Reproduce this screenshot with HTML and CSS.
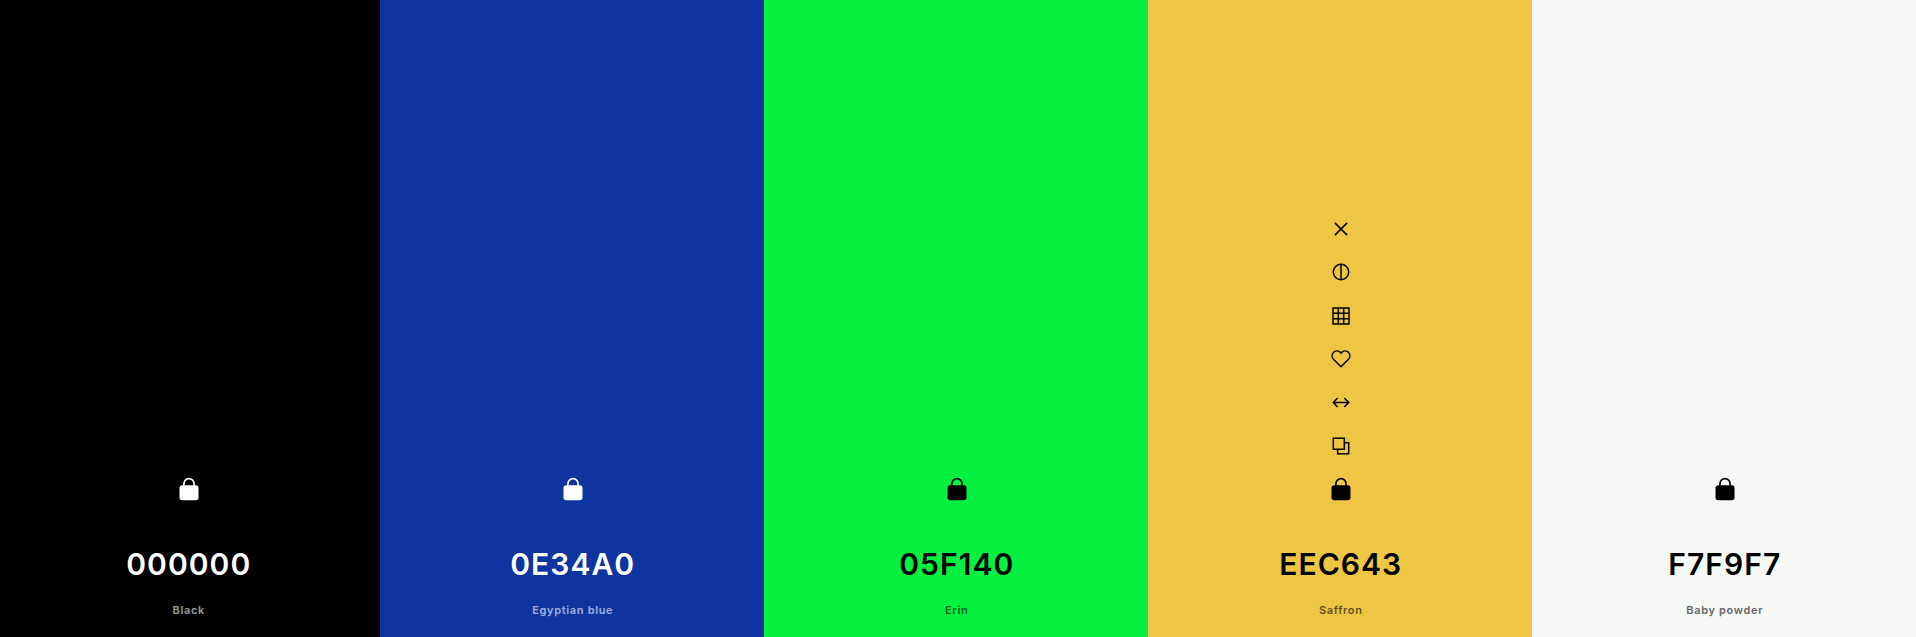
FILE: index.html
```html
<!DOCTYPE html>
<html>
<head>
	<meta charset="UTF-8">
	<title>Palette</title>
	<link rel="stylesheet" href="styles.css">
</head>
<body>
<svg class="sprite" width="0" height="0">
	<symbol id="lock" viewBox="0 0 24 24">
		<path d="M6.900 10V6.700a5.100 5.100 0 0 1 10.200 0V10" fill="none" stroke="currentColor" stroke-width="1.600"/>
		<rect x="2.500" y="8.300" width="19" height="15" rx="2.800" fill="currentColor" stroke="none"/>
	</symbol>
</svg>

<div class="palette">
	<div class="col col-black">
		<div class="tools">
			<div class="tool"><svg class="icon"><use href="#lock"/></svg></div>
		</div>
		<div class="hex">000000</div>
		<div class="name">Black</div>
	</div>

	<div class="col col-blue">
		<div class="tools">
			<div class="tool"><svg class="icon"><use href="#lock"/></svg></div>
		</div>
		<div class="hex">0E34A0</div>
		<div class="name">Egyptian blue</div>
	</div>

	<div class="col col-green">
		<div class="tools">
			<div class="tool"><svg class="icon"><use href="#lock"/></svg></div>
		</div>
		<div class="hex">05F140</div>
		<div class="name">Erin</div>
	</div>

	<div class="col col-yellow">
		<div class="tools">
			<div class="tool">
				<svg class="icon" viewBox="0 0 24 24"><path d="M5.900 5.900l12.200 12.200M18.100 5.900L5.900 18.100"/></svg>
			</div>
			<div class="tool">
				<svg class="icon" viewBox="0 0 24 24"><circle cx="12" cy="12" r="7.700"/><path d="M12 4.300v15.400"/></svg>
			</div>
			<div class="tool">
				<svg class="icon" viewBox="0 0 24 24"><path d="M4 4h16v16H4zM4 9.330h16M4 14.670h16M9.330 4v16M14.670 4v16"/></svg>
			</div>
			<div class="tool">
				<svg class="icon" viewBox="0 0 24 24"><path d="M12 19.800l-7.500-7.600a4.900 4.900 0 0 1 0-6.800 4.900 4.900 0 0 1 6.800 0l.7.700.7-.7a4.900 4.900 0 0 1 6.800 0 4.900 4.900 0 0 1 0 6.800z"/></svg>
			</div>
			<div class="tool">
				<svg class="icon" viewBox="0 0 24 24"><path d="M4.500 11.600h15M8.700 7.100l-4.400 4.500 4.400 4.500M15.300 7.100l4.400 4.500-4.400 4.500"/></svg>
			</div>
			<div class="tool">
				<svg class="icon" viewBox="0 0 24 24"><path d="M4.300 4.300h11v11h-11zM15.300 8.700h4.400v11h-11v-4.400"/></svg>
			</div>
			<div class="tool"><svg class="icon"><use href="#lock"/></svg></div>
		</div>
		<div class="hex">EEC643</div>
		<div class="name">Saffron</div>
	</div>

	<div class="col col-white">
		<div class="tools">
			<div class="tool"><svg class="icon"><use href="#lock"/></svg></div>
		</div>
		<div class="hex">F7F9F7</div>
		<div class="name">Baby powder</div>
	</div>
</div>
</body>
</html>
```

FILE: styles.css
```css
html, body {
	margin: 0;
	height: 100%;
}

body {
	font-family: "Inter", "Liberation Sans", sans-serif;
	overflow: hidden;
}

.sprite {
	display: block;
	height: 0;
}

.palette {
	display: grid;
	grid-template-columns: 380px repeat(4, 384px);
	height: 637px;
}

.col {
	display: flex;
	flex-direction: column;
	align-items: center;
	justify-content: flex-end;
	padding-left: 1.500px;
	padding-bottom: 19px;
	color: #000;
}

.col-black {
	padding-left: 0;
	padding-right: 2.500px;
	background: #000000;
	color: #fff;
}

.col-blue { background: #0e34a0; color: #fff; }
.col-green { background: #05f140; }
.col-yellow { background: #eec643; }
.col-white { background: #f7f9f7; }

.tools {
	display: flex;
	flex-direction: column;
	align-items: center;
	margin-bottom: 34px;
}

.tool {
	display: flex;
	align-items: center;
	justify-content: center;
	width: 44px;
	height: 43.400px;
}

.icon {
	width: 24px;
	height: 24px;
	fill: none;
	stroke: currentColor;
	stroke-width: 1.500;
}

.hex {
	font-size: 30px;
	font-weight: 600;
	line-height: 39px;
	letter-spacing: 1.050px;
}

.name {
	margin-top: 19px;
	font-size: 11px;
	font-weight: 600;
	line-height: 15px;
	letter-spacing: 0.660px;
	opacity: 0.6;
}
```
